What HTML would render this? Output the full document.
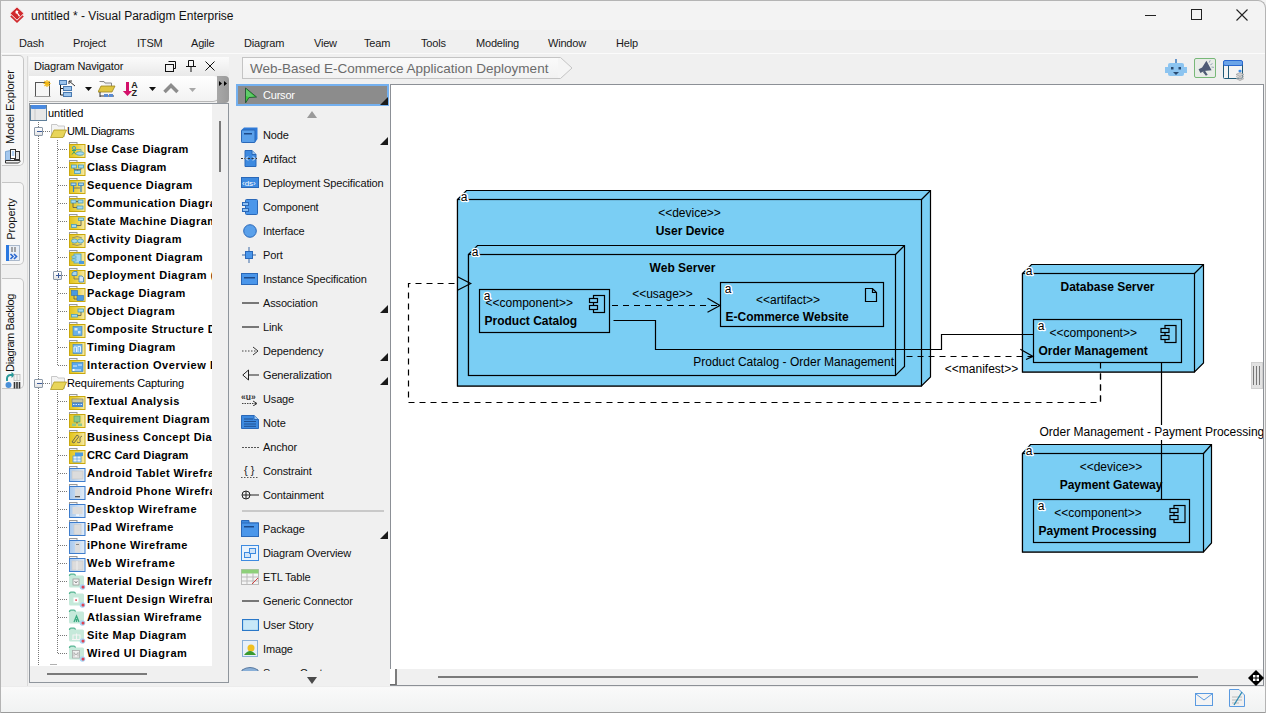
<!DOCTYPE html>
<html><head><meta charset="utf-8">
<style>
*{margin:0;padding:0;box-sizing:border-box}
html,body{width:1266px;height:713px;overflow:hidden;background:#f0f0f0;font-family:"Liberation Sans",sans-serif;color:#000}
.a{position:absolute;white-space:nowrap}
#win{position:absolute;left:0;top:0;width:1266px;height:713px;background:#f0f0f0;overflow:hidden}
#title{position:absolute;left:0;top:0;width:1266px;height:30px;background:#f3f3f3}
#menu{position:absolute;left:0;top:30px;width:1266px;height:23px;background:#f0f0f0}
.mi{position:absolute;top:37px;font-size:11px;letter-spacing:-0.2px;color:#1a1a1a}
.tree .r{position:absolute;font-size:11px;white-space:nowrap;height:18px;line-height:18px}
.tree .b{font-weight:bold;letter-spacing:0.33px}
.pal .t{position:absolute;left:263px;font-size:11px;color:#111;white-space:nowrap;line-height:14px}
.pal .tri{position:absolute;width:0;height:0;border-left:7px solid transparent;border-bottom:7px solid #222}
.dh{height:1px;background-image:linear-gradient(90deg,#777 50%,transparent 50%);background-size:2px 1px}
.dv{width:1px;background-image:linear-gradient(#777 50%,transparent 50%);background-size:1px 2px}
.exp{width:9px;height:9px;border:1px solid #8a98a8;background:linear-gradient(#fff,#e4e4e4);border-radius:1px}
.ic-y{width:17px;height:16px;background:#e3c93a;border:1px solid #b89e1a;border-top-width:2px;box-shadow:inset 0 0 0 2px #f2df6e}
.ic-w{width:16px;height:16px;background:#e6e6e6;border:1px solid #4a7ac0;border-left-width:2px}
.ic-g{width:17px;height:16px;background:#bfe3d4;border-top:2px solid #5ab496;border-radius:2px}
.pt{left:263px;font-size:11px;line-height:14px;color:#111;letter-spacing:-0.15px}
.pal-tri{width:0;height:0;border-left:8px solid transparent;border-bottom:8px solid #1a1a1a}
</style></head><body>
<div id="win">
<svg width="0" height="0" style="position:absolute"><defs><linearGradient id="yg" x1="0" x2="1"><stop offset="0" stop-color="#e2c41c"/><stop offset="0.55" stop-color="#ecd450"/><stop offset="1" stop-color="#f6ecb0"/></linearGradient><linearGradient id="bg" x1="0" x2="1"><stop offset="0" stop-color="#a8c8ec"/><stop offset="1" stop-color="#e4eef8"/></linearGradient></defs></svg>
<div id="title">
  <svg class="a" style="left:9px;top:6px" width="16" height="18" viewBox="0 0 16 18"><path d="M8 4 L14.8 10.5 L8 17 L1.2 10.5Z" fill="#d12a2e"/><path d="M8 0.8 L15 7.4 L8 14.2 L1 7.4Z" fill="#d12a2e" stroke="#f3f3f3" stroke-width="1"/><path d="M6.3 5.8 L7.6 4.2 L9.4 5.3 L8.8 6.8 L11 9.8 L10 10.8 L8.2 7.8 L6.8 7.6Z" fill="#fff"/></svg>
  <div class="a" style="left:31px;top:9px;font-size:12px;color:#111">untitled * - Visual Paradigm Enterprise</div>
  <div class="a" style="left:1145px;top:15px;width:11px;height:1px;background:#222"></div>
  <div class="a" style="left:1191px;top:9px;width:11px;height:11px;border:1px solid #222"></div>
  <svg class="a" style="left:1236px;top:9px" width="12" height="12"><path d="M0.5 0.5 L11.5 11.5 M11.5 0.5 L0.5 11.5" stroke="#222" stroke-width="1.1"/></svg>
</div>
<div id="menu"></div>
<div class="mi" style="left:19px">Dash</div>
<div class="mi" style="left:73px">Project</div>
<div class="mi" style="left:137px">ITSM</div>
<div class="mi" style="left:191px">Agile</div>
<div class="mi" style="left:244px">Diagram</div>
<div class="mi" style="left:314px">View</div>
<div class="mi" style="left:364px">Team</div>
<div class="mi" style="left:421px">Tools</div>
<div class="mi" style="left:476px">Modeling</div>
<div class="mi" style="left:548px">Window</div>
<div class="mi" style="left:616px">Help</div>
<div class="a" style="left:0;top:53px;width:1266px;height:1px;background:#fbfbfb"></div>

<!-- LEFT TABS -->
<div class="a" style="left:2px;top:55px;width:22px;height:111px;background:#f7f7f7;border:1px solid #c6c6c6;border-left:none;border-radius:0 5px 5px 0"></div>
<div class="a" style="left:-31px;top:100px;width:82px;text-align:center;transform:rotate(-90deg);font-size:11px;color:#111;line-height:14px">Model Explorer</div>
<svg class="a" style="left:4px;top:148px" width="18" height="16" viewBox="0 0 18 16"><path d="M1.5 3.5 L6.5 2.5 V12 L1.5 13Z" fill="#a4c8ee" stroke="#6a98c8" stroke-width="0.8"/><rect x="10.5" y="3.5" width="5" height="8" fill="#e4e4e4" stroke="#333" stroke-width="1"/><rect x="6.5" y="1.5" width="5" height="9" fill="#fff" stroke="#333" stroke-width="1"/><rect x="7.8" y="3" width="2.5" height="5" fill="#b0cff0"/><path d="M1.5 12.5 H16 V13.5 L14.5 15 H1.5Z" fill="#eee" stroke="#333" stroke-width="1"/></svg>
<div class="a" style="left:2px;top:182px;width:22px;height:83px;background:#f7f7f7;border:1px solid #c6c6c6;border-left:none;border-radius:0 5px 5px 0"></div>
<div class="a" style="left:-14px;top:212px;width:50px;text-align:center;transform:rotate(-90deg);font-size:11px;color:#111;line-height:14px">Property</div>
<svg class="a" style="left:6px;top:245px" width="14" height="16" viewBox="0 0 14 16"><rect x="0.5" y="0.5" width="13" height="15" fill="#e8eef6" stroke="#9aaac0" stroke-width="0.8"/><rect x="0" y="0" width="3" height="16" fill="#2a78e0"/><path d="M6 2 V7 M9 2 V7" stroke="#8a8a8a" stroke-width="1.5"/><path d="M4.5 9 L7 11.5 L4.5 14 M8 9 L10.5 11.5 L8 14" stroke="#2a68d0" stroke-width="1.6" fill="none"/></svg>
<div class="a" style="left:2px;top:278px;width:22px;height:111px;background:#f7f7f7;border:1px solid #c6c6c6;border-left:none;border-radius:0 5px 5px 0"></div>
<div class="a" style="left:-32px;top:326px;width:84px;text-align:center;transform:rotate(-90deg);font-size:11px;letter-spacing:-0.4px;color:#111;line-height:14px">Diagram Backlog</div>
<svg class="a" style="left:4px;top:372px" width="18" height="17" viewBox="0 0 18 17"><path d="M3 9 V6.5 A3.5 3.5 0 0 1 6.5 3 H8" stroke="#2a9a9a" stroke-width="2" fill="none"/><path d="M7.5 0 L11 3 L7.5 6Z" fill="#2a9a9a"/><circle cx="4.5" cy="13" r="3" fill="#4a90d8"/><path d="M10.5 10 V16.5 M13 10 V16.5 M15.5 10 V16.5" stroke="#333" stroke-width="1.6"/><rect x="10" y="2.5" width="6" height="6" fill="#f4f4f4" stroke="#bbb" stroke-width="0.8"/><path d="M13 2.5 V8.5" stroke="#bbb" stroke-width="0.8"/></svg>
<div class="a" style="left:27px;top:56px;width:1px;height:630px;background:#dadada"></div>

<!-- NAVIGATOR -->
<div class="a" style="left:29px;top:57px;width:200px;height:19px;background:linear-gradient(#fbfbfb,#e9e9e9)"></div>
<div class="a" style="left:34px;top:59px;font-size:11px;letter-spacing:-0.15px;line-height:14px;color:#111">Diagram Navigator</div>
<svg class="a" style="left:165px;top:61px" width="12" height="11"><path d="M3.5 0.5 H10.5 V7.5 H8.5" stroke="#111" fill="none"/><rect x="0.5" y="3.5" width="8" height="7" fill="none" stroke="#111"/></svg>
<svg class="a" style="left:186px;top:60px" width="10" height="12"><path d="M2.5 0.5 H7.5 V6.5 H2.5Z M0 6.5 H10 M5 7 V12" stroke="#111" fill="none"/></svg>
<svg class="a" style="left:205px;top:61px" width="10" height="10"><path d="M0.5 0.5 L9.5 9.5 M9.5 0.5 L0.5 9.5" stroke="#111" stroke-width="1"/></svg>
<div class="a" style="left:29px;top:76px;width:190px;height:26px;background:linear-gradient(#ffffff,#f2f2f2);border-radius:0 6px 6px 0;border-bottom:1px solid #b8b8b8"></div>
<div class="a" style="left:217px;top:76px;width:12px;height:27px;background:linear-gradient(90deg,#a8a8a8,#9a9a9a);border-radius:0 4px 4px 0"></div>
<svg class="a" style="left:219px;top:81px" width="9" height="5"><path d="M0 0 L3 2.5 L0 5Z M5 0 L8 2.5 L5 5Z" fill="#000"/></svg>
<svg class="a" style="left:34px;top:80px" width="18" height="18"><rect x="1.5" y="2.5" width="14" height="14" fill="#f6f6f6" stroke="#555"/><rect x="0.5" y="16" width="16" height="1" fill="#999"/><path d="M13 0 V7 M9.5 3.5 H16.5 M10.5 1 L15.5 6 M15.5 1 L10.5 6" stroke="#f2b712" stroke-width="1.2"/></svg>
<svg class="a" style="left:58px;top:80px" width="20" height="18"><rect x="1.5" y="0.5" width="7" height="4" fill="#9cc4ec" stroke="#4a7ab0"/><rect x="5.5" y="6.5" width="8" height="4" fill="#9cc4ec" stroke="#4a7ab0"/><rect x="5.5" y="12.5" width="8" height="4" fill="#9cc4ec" stroke="#4a7ab0"/><path d="M2.5 5 V15 H5 M2.5 8.5 H5" stroke="#222" fill="none"/><path d="M11 1 L17 6 M11 1 H14 M11 1 V4" stroke="#333" fill="none"/></svg>
<svg class="a" style="left:85px;top:87px" width="7" height="4"><path d="M0 0 H7 L3.5 4Z" fill="#111"/></svg>
<svg class="a" style="left:98px;top:80px" width="18" height="18"><path d="M1.5 1.5 H6 L7 3 H13.5 V8" stroke="#888" fill="#eee"/><path d="M3 6 H17 L14 12 H0Z" fill="#e0c640" stroke="#9a8420" stroke-width="0.8"/><path d="M2 12 V17 M2 16 H16" stroke="#333"/><rect x="6" y="14" width="4" height="3" fill="#5a8ad0"/><rect x="11" y="14" width="4" height="3" fill="#5a8ad0"/></svg>
<svg class="a" style="left:122px;top:79px" width="18" height="18"><rect x="4" y="3" width="3" height="10" fill="#d3106a"/><path d="M0.8 12 H10.2 L5.5 17Z" fill="#d3106a"/><text x="9.3" y="8.6" font-size="9" font-weight="bold" font-family="Liberation Sans" fill="#222">A</text><text x="9.5" y="17" font-size="9" font-weight="bold" font-family="Liberation Sans" fill="#222">Z</text></svg>
<svg class="a" style="left:149px;top:87px" width="7" height="4"><path d="M0 0 H7 L3.5 4Z" fill="#111"/></svg>
<svg class="a" style="left:163px;top:82px" width="16" height="12"><path d="M1.5 10 L8 3.5 L14.5 10" stroke="#8c8c8c" stroke-width="3.5" fill="none"/></svg>
<svg class="a" style="left:189px;top:88px" width="7" height="4"><path d="M0 0 H7 L3.5 4Z" fill="#a8a8a8"/></svg>
<div class="a" style="left:29px;top:103px;width:200px;height:580px;border:1px solid #8f959c;background:#f0f0f0"></div>
<div class="a" style="left:30px;top:104px;width:182px;height:562px;background:#fff"></div>
<div class="a" style="left:219px;top:121px;width:2px;height:51px;background:#7a7a7a"></div>
<div class="a" style="left:47px;top:673px;width:100px;height:2px;background:#7a7a7a"></div>
<svg class="a" style="left:30px;top:104px" width="18" height="18"><rect x="0.5" y="1.5" width="16" height="15" fill="#e8e8e8" stroke="#5f7f9a"/><rect x="1" y="1" width="15" height="4" fill="#4a8ae0" rx="1"/><path d="M5 5 V16" stroke="#c8c8c8"/></svg>
<div class="tree" style="position:absolute;left:0;top:0;width:212px;height:666px;overflow:hidden">
<div class="r" style="left:48px;top:104px">untitled</div>
<div class="r" style="left:67px;top:122px;letter-spacing:-0.5px">UML Diagrams</div>
<div class="r b" style="left:87px;top:140px;letter-spacing:0.31px">Use Case Diagram</div>
<svg class="a" style="left:69px;top:142px" width="17" height="16" viewBox="0 0 17 16"><rect x="0.5" y="0.5" width="7.5" height="2.5" fill="#f4f4f4" stroke="#9a9a9a" stroke-width="1"/><rect x="0.5" y="2.5" width="15.5" height="13" fill="url(#yg)" stroke="#c9a80c" stroke-width="1"/><circle cx="5" cy="6" r="1.6" fill="none" stroke="#4aa0b8"/><path d="M5 7.5 V10 L3 12.5 M5 10 L7 12.5 M3 8.5 H7" stroke="#3aa070" fill="none"/><ellipse cx="11" cy="11.5" rx="4" ry="1.8" fill="#a8d8f0" stroke="#4aa0b8" stroke-width="0.8"/><path d="M6 7.5 H12 V9" stroke="#4aa0b8" fill="none" stroke-width="0.8"/></svg>
<div class="a dh" style="left:58px;top:149px;width:10px"></div>
<div class="r b" style="left:87px;top:158px;letter-spacing:0.24px">Class Diagram</div>
<svg class="a" style="left:69px;top:160px" width="17" height="16" viewBox="0 0 17 16"><rect x="0.5" y="0.5" width="7.5" height="2.5" fill="#f4f4f4" stroke="#9a9a9a" stroke-width="1"/><rect x="0.5" y="2.5" width="15.5" height="13" fill="url(#yg)" stroke="#c9a80c" stroke-width="1"/><rect x="2.5" y="5" width="5" height="3" fill="#a8d8f0" stroke="#4aa0b8" stroke-width="0.8"/><rect x="9.5" y="5" width="5" height="3" fill="#a8d8f0" stroke="#4aa0b8" stroke-width="0.8"/><rect x="5.5" y="10.5" width="6" height="3" fill="#a8d8f0" stroke="#4aa0b8" stroke-width="0.8"/><path d="M5 8 V9.5 H12 V8 M8.5 9.5 V10.5" stroke="#666" stroke-width="0.8" fill="none"/></svg>
<div class="a dh" style="left:58px;top:167px;width:10px"></div>
<div class="r b" style="left:87px;top:176px;letter-spacing:0.42px">Sequence Diagram</div>
<svg class="a" style="left:69px;top:178px" width="17" height="16" viewBox="0 0 17 16"><rect x="0.5" y="0.5" width="7.5" height="2.5" fill="#f4f4f4" stroke="#9a9a9a" stroke-width="1"/><rect x="0.5" y="2.5" width="15.5" height="13" fill="url(#yg)" stroke="#c9a80c" stroke-width="1"/><rect x="2" y="5" width="5" height="2.5" fill="#a8d8f0" stroke="#3a80c0" stroke-width="0.8"/><rect x="9.5" y="5" width="5" height="2.5" fill="#a8d8f0" stroke="#3a80c0" stroke-width="0.8"/><path d="M4.5 7.5 V14 M12 7.5 V14" stroke="#3a80c0" stroke-width="1.2"/><path d="M5 10 H11" stroke="#666" stroke-width="0.8"/></svg>
<div class="a dh" style="left:58px;top:185px;width:10px"></div>
<div class="r b" style="left:87px;top:194px;letter-spacing:0.45px">Communication Diagram</div>
<svg class="a" style="left:69px;top:196px" width="17" height="16" viewBox="0 0 17 16"><rect x="0.5" y="0.5" width="7.5" height="2.5" fill="#f4f4f4" stroke="#9a9a9a" stroke-width="1"/><rect x="0.5" y="2.5" width="15.5" height="13" fill="url(#yg)" stroke="#c9a80c" stroke-width="1"/><rect x="2" y="4" width="5" height="3" fill="#a8d8f0" stroke="#4aa0b8" stroke-width="0.8"/><rect x="9" y="4" width="5" height="3" fill="#a8d8f0" stroke="#4aa0b8" stroke-width="0.8"/><rect x="8" y="10" width="6" height="3" fill="#a8d8f0" stroke="#4aa0b8" stroke-width="0.8"/><path d="M4 7 V11.5 H8 M7 5.5 H9" stroke="#555" stroke-width="0.8" fill="none"/></svg>
<div class="a dh" style="left:58px;top:203px;width:10px"></div>
<div class="r b" style="left:87px;top:212px;letter-spacing:0.45px">State Machine Diagram</div>
<svg class="a" style="left:69px;top:214px" width="17" height="16" viewBox="0 0 17 16"><rect x="0.5" y="0.5" width="7.5" height="2.5" fill="#f4f4f4" stroke="#9a9a9a" stroke-width="1"/><rect x="0.5" y="2.5" width="15.5" height="13" fill="url(#yg)" stroke="#c9a80c" stroke-width="1"/><rect x="9.5" y="4" width="5" height="2.5" fill="#a8d8f0" stroke="#4aa0b8" stroke-width="0.8"/><rect x="2.5" y="10.5" width="5" height="3" fill="#a8d8f0" stroke="#4aa0b8" stroke-width="0.8"/><path d="M12 6.5 V11.5 H7.5" stroke="#555" stroke-width="0.8" fill="none"/></svg>
<div class="a dh" style="left:58px;top:221px;width:10px"></div>
<div class="r b" style="left:87px;top:230px;letter-spacing:0.51px">Activity Diagram</div>
<svg class="a" style="left:69px;top:232px" width="17" height="16" viewBox="0 0 17 16"><rect x="0.5" y="0.5" width="7.5" height="2.5" fill="#f4f4f4" stroke="#9a9a9a" stroke-width="1"/><rect x="0.5" y="2.5" width="15.5" height="13" fill="url(#yg)" stroke="#c9a80c" stroke-width="1"/><ellipse cx="5.5" cy="9" rx="3" ry="2" fill="#a8d8f0" stroke="#4aa0b8" stroke-width="0.8"/><ellipse cx="11.5" cy="9" rx="3" ry="2" fill="#a8d8f0" stroke="#4aa0b8" stroke-width="0.8"/><path d="M3 6 Q8 3 13 6 M3 12 Q8 15 13 12" stroke="#777" stroke-width="0.7" fill="none"/></svg>
<div class="a dh" style="left:58px;top:239px;width:10px"></div>
<div class="r b" style="left:87px;top:248px;letter-spacing:0.46px">Component Diagram</div>
<svg class="a" style="left:69px;top:250px" width="17" height="16" viewBox="0 0 17 16"><rect x="0.5" y="0.5" width="7.5" height="2.5" fill="#f4f4f4" stroke="#9a9a9a" stroke-width="1"/><rect x="0.5" y="2.5" width="15.5" height="13" fill="url(#yg)" stroke="#c9a80c" stroke-width="1"/><rect x="5" y="4" width="7" height="9" fill="#a8d8f0" stroke="#4aa0b8" stroke-width="0.8"/><rect x="3" y="6" width="4" height="2" fill="#a8d8f0" stroke="#4aa0b8" stroke-width="0.6"/><rect x="3" y="9" width="4" height="2" fill="#a8d8f0" stroke="#4aa0b8" stroke-width="0.6"/><rect x="10" y="11" width="5" height="3" fill="#4a9ae0"/></svg>
<div class="a dh" style="left:58px;top:257px;width:10px"></div>
<div class="r b" style="left:87px;top:266px;letter-spacing:0.56px">Deployment Diagram (</div>
<svg class="a" style="left:69px;top:268px" width="17" height="16" viewBox="0 0 17 16"><rect x="0.5" y="0.5" width="7.5" height="2.5" fill="#f4f4f4" stroke="#9a9a9a" stroke-width="1"/><rect x="0.5" y="2.5" width="15.5" height="13" fill="url(#yg)" stroke="#c9a80c" stroke-width="1"/><path d="M3 5 L5 3.5 L8 3.5 L8 7.5 L3 7.5Z" fill="#a8d8f0" stroke="#3a80c0" stroke-width="0.8"/><path d="M10 8 H13 L14.5 9.5 V14 H10Z" fill="#d8e8f8" stroke="#3a80c0" stroke-width="0.8"/><path d="M5 8 V11 H10" stroke="#666" stroke-width="0.7" fill="none"/></svg>
<div class="a dh" style="left:58px;top:275px;width:10px"></div>
<div class="r b" style="left:87px;top:284px;letter-spacing:0.47px">Package Diagram</div>
<svg class="a" style="left:69px;top:286px" width="17" height="16" viewBox="0 0 17 16"><rect x="0.5" y="0.5" width="7.5" height="2.5" fill="#f4f4f4" stroke="#9a9a9a" stroke-width="1"/><rect x="0.5" y="2.5" width="15.5" height="13" fill="url(#yg)" stroke="#c9a80c" stroke-width="1"/><rect x="2.5" y="4.5" width="6" height="5" fill="#4a9ae0" stroke="#2a70c0" stroke-width="0.6"/><rect x="8" y="9.5" width="6.5" height="5" fill="#4a9ae0" stroke="#2a70c0" stroke-width="0.6"/><path d="M5 9.5 V13 H8" stroke="#555" stroke-width="0.8" fill="none"/></svg>
<div class="a dh" style="left:58px;top:293px;width:10px"></div>
<div class="r b" style="left:87px;top:302px;letter-spacing:0.49px">Object Diagram</div>
<svg class="a" style="left:69px;top:304px" width="17" height="16" viewBox="0 0 17 16"><rect x="0.5" y="0.5" width="7.5" height="2.5" fill="#f4f4f4" stroke="#9a9a9a" stroke-width="1"/><rect x="0.5" y="2.5" width="15.5" height="13" fill="url(#yg)" stroke="#c9a80c" stroke-width="1"/><rect x="9" y="5" width="5.5" height="3" fill="#a8d8f0" stroke="#4aa0b8" stroke-width="0.8"/><rect x="2.5" y="10.5" width="6" height="2.5" fill="#a8d8f0" stroke="#4aa0b8" stroke-width="0.8"/><path d="M12 8 V11.5 H8.5" stroke="#555" stroke-width="0.8" fill="none"/></svg>
<div class="a dh" style="left:58px;top:311px;width:10px"></div>
<div class="r b" style="left:87px;top:320px;letter-spacing:0.45px">Composite Structure Diagram</div>
<svg class="a" style="left:69px;top:322px" width="17" height="16" viewBox="0 0 17 16"><rect x="0.5" y="0.5" width="7.5" height="2.5" fill="#f4f4f4" stroke="#9a9a9a" stroke-width="1"/><rect x="0.5" y="2.5" width="15.5" height="13" fill="url(#yg)" stroke="#c9a80c" stroke-width="1"/><rect x="4" y="4.5" width="9" height="9" fill="#6ab0e8" stroke="#3a80c0" stroke-width="0.6"/><rect x="5.5" y="6" width="3" height="2.5" fill="#d0e8f8"/><rect x="9" y="9" width="2.5" height="2.5" fill="#d0e8f8"/></svg>
<div class="a dh" style="left:58px;top:329px;width:10px"></div>
<div class="r b" style="left:87px;top:338px;letter-spacing:0.41px">Timing Diagram</div>
<svg class="a" style="left:69px;top:340px" width="17" height="16" viewBox="0 0 17 16"><rect x="0.5" y="0.5" width="7.5" height="2.5" fill="#f4f4f4" stroke="#9a9a9a" stroke-width="1"/><rect x="0.5" y="2.5" width="15.5" height="13" fill="url(#yg)" stroke="#c9a80c" stroke-width="1"/><rect x="4" y="4.5" width="9" height="9" fill="#7ab8ec" stroke="#3a80c0" stroke-width="0.6"/><path d="M5 12 V7 H7.5 V12 M9 12 V6.5 H11.5 V12" stroke="#e0f0ff" fill="none"/></svg>
<div class="a dh" style="left:58px;top:347px;width:10px"></div>
<div class="r b" style="left:87px;top:356px;letter-spacing:0.56px">Interaction Overview Diagram</div>
<svg class="a" style="left:69px;top:358px" width="17" height="16" viewBox="0 0 17 16"><rect x="0.5" y="0.5" width="7.5" height="2.5" fill="#f4f4f4" stroke="#9a9a9a" stroke-width="1"/><rect x="0.5" y="2.5" width="15.5" height="13" fill="url(#yg)" stroke="#c9a80c" stroke-width="1"/><rect x="3" y="4.5" width="11" height="9" fill="#5aa8ec" stroke="#3a80c0" stroke-width="0.6"/><path d="M4 8 H8 M9 7 H13 M5 12 H12" stroke="#e0f0ff"/><rect x="3.5" y="11" width="2" height="2" fill="#fff"/></svg>
<div class="a dh" style="left:58px;top:365px;width:10px"></div>
<div class="r" style="left:67px;top:374px;letter-spacing:-0.1px">Requirements Capturing</div>
<div class="r b" style="left:87px;top:392px;letter-spacing:0.45px">Textual Analysis</div>
<svg class="a" style="left:69px;top:394px" width="17" height="16" viewBox="0 0 17 16"><rect x="0.5" y="0.5" width="7.5" height="2.5" fill="#f4f4f4" stroke="#9a9a9a" stroke-width="1"/><rect x="0.5" y="2.5" width="15.5" height="13" fill="url(#yg)" stroke="#c9a80c" stroke-width="1"/><rect x="3" y="5" width="11" height="3.5" fill="#c8c8a0" stroke="#777" stroke-width="0.6"/><rect x="3" y="8.5" width="11" height="4.5" fill="#4a8ad0"/><path d="M4 10.5 H13" stroke="#d0e8ff" stroke-dasharray="1.5,1"/></svg>
<div class="a dh" style="left:58px;top:401px;width:10px"></div>
<div class="r b" style="left:87px;top:410px;letter-spacing:0.45px">Requirement Diagram</div>
<svg class="a" style="left:69px;top:412px" width="17" height="16" viewBox="0 0 17 16"><rect x="0.5" y="0.5" width="7.5" height="2.5" fill="#f4f4f4" stroke="#9a9a9a" stroke-width="1"/><rect x="0.5" y="2.5" width="15.5" height="13" fill="url(#yg)" stroke="#c9a80c" stroke-width="1"/><rect x="5" y="4" width="6" height="6" fill="#8cc890" stroke="#4a9a60" stroke-width="0.6"/><rect x="3" y="11.5" width="4" height="2.5" fill="#8cc890"/><rect x="9" y="11.5" width="4" height="2.5" fill="#8cc890"/><path d="M8 10 V11.5" stroke="#555"/></svg>
<div class="a dh" style="left:58px;top:419px;width:10px"></div>
<div class="r b" style="left:87px;top:428px;letter-spacing:0.45px">Business Concept Diagram</div>
<svg class="a" style="left:69px;top:430px" width="17" height="16" viewBox="0 0 17 16"><rect x="0.5" y="0.5" width="7.5" height="2.5" fill="#f4f4f4" stroke="#9a9a9a" stroke-width="1"/><rect x="0.5" y="2.5" width="15.5" height="13" fill="url(#yg)" stroke="#c9a80c" stroke-width="1"/><path d="M3 12 L8 5 L10 6.5 L5 13Z" fill="none" stroke="#555" stroke-width="0.8"/><path d="M8 12 Q12 14 11 10 Q10 7 13 6" stroke="#555" stroke-width="0.8" fill="none"/></svg>
<div class="a dh" style="left:58px;top:437px;width:10px"></div>
<div class="r b" style="left:87px;top:446px;letter-spacing:0.15px">CRC Card Diagram</div>
<svg class="a" style="left:69px;top:448px" width="17" height="16" viewBox="0 0 17 16"><rect x="0.5" y="0.5" width="7.5" height="2.5" fill="#f4f4f4" stroke="#9a9a9a" stroke-width="1"/><rect x="0.5" y="2.5" width="15.5" height="13" fill="url(#yg)" stroke="#c9a80c" stroke-width="1"/><rect x="6" y="4.5" width="8" height="3.5" fill="#4a9ae0"/><rect x="4" y="8" width="8" height="6" fill="#e8f0f8" stroke="#4a9ae0" stroke-width="0.8"/><path d="M8 8 V14 M4 11 H12" stroke="#4a9ae0" stroke-width="0.6"/></svg>
<div class="a dh" style="left:58px;top:455px;width:10px"></div>
<div class="r b" style="left:87px;top:464px;letter-spacing:0.45px">Android Tablet Wireframe</div>
<svg class="a" style="left:69px;top:466px" width="17" height="16" viewBox="0 0 17 16"><rect x="0.5" y="0.5" width="7.5" height="2.5" fill="#f4f4f4" stroke="#9a9a9a" stroke-width="1"/><rect x="0.5" y="2.5" width="15.5" height="13" fill="url(#bg)" stroke="#3d7ccc" stroke-width="1"/><rect x="3" y="5" width="11" height="8" fill="#dcdcdc" stroke="#c4c4c4" stroke-width="0.6"/></svg>
<div class="a dh" style="left:58px;top:473px;width:10px"></div>
<div class="r b" style="left:87px;top:482px;letter-spacing:0.45px">Android Phone Wireframe</div>
<svg class="a" style="left:69px;top:484px" width="17" height="16" viewBox="0 0 17 16"><rect x="0.5" y="0.5" width="7.5" height="2.5" fill="#f4f4f4" stroke="#9a9a9a" stroke-width="1"/><rect x="0.5" y="2.5" width="15.5" height="13" fill="url(#bg)" stroke="#3d7ccc" stroke-width="1"/><rect x="6" y="4.5" width="5" height="9.5" fill="#dcdcdc"/><rect x="6" y="12" width="5" height="1.3" fill="#555"/></svg>
<div class="a dh" style="left:58px;top:491px;width:10px"></div>
<div class="r b" style="left:87px;top:500px;letter-spacing:0.59px">Desktop Wireframe</div>
<svg class="a" style="left:69px;top:502px" width="17" height="16" viewBox="0 0 17 16"><rect x="0.5" y="0.5" width="7.5" height="2.5" fill="#f4f4f4" stroke="#9a9a9a" stroke-width="1"/><rect x="0.5" y="2.5" width="15.5" height="13" fill="url(#bg)" stroke="#3d7ccc" stroke-width="1"/><rect x="3.5" y="5" width="10" height="7" fill="#dcdcdc"/><rect x="7" y="12.5" width="3" height="1.2" fill="#fff"/></svg>
<div class="a dh" style="left:58px;top:509px;width:10px"></div>
<div class="r b" style="left:87px;top:518px;letter-spacing:0.5px">iPad Wireframe</div>
<svg class="a" style="left:69px;top:520px" width="17" height="16" viewBox="0 0 17 16"><rect x="0.5" y="0.5" width="7.5" height="2.5" fill="#f4f4f4" stroke="#9a9a9a" stroke-width="1"/><rect x="0.5" y="2.5" width="15.5" height="13" fill="url(#bg)" stroke="#3d7ccc" stroke-width="1"/><rect x="5" y="4.5" width="7" height="10" fill="#dcdcdc" stroke="#c8c8c8" stroke-width="0.6"/></svg>
<div class="a dh" style="left:58px;top:527px;width:10px"></div>
<div class="r b" style="left:87px;top:536px;letter-spacing:0.47px">iPhone Wireframe</div>
<svg class="a" style="left:69px;top:538px" width="17" height="16" viewBox="0 0 17 16"><rect x="0.5" y="0.5" width="7.5" height="2.5" fill="#f4f4f4" stroke="#9a9a9a" stroke-width="1"/><rect x="0.5" y="2.5" width="15.5" height="13" fill="url(#bg)" stroke="#3d7ccc" stroke-width="1"/><rect x="6" y="4.5" width="5" height="10" fill="#dcdcdc"/><rect x="7" y="6" width="3" height="1" fill="#888"/></svg>
<div class="a dh" style="left:58px;top:545px;width:10px"></div>
<div class="r b" style="left:87px;top:554px;letter-spacing:0.67px">Web Wireframe</div>
<svg class="a" style="left:69px;top:556px" width="17" height="16" viewBox="0 0 17 16"><rect x="0.5" y="0.5" width="7.5" height="2.5" fill="#f4f4f4" stroke="#9a9a9a" stroke-width="1"/><rect x="0.5" y="2.5" width="15.5" height="13" fill="url(#bg)" stroke="#3d7ccc" stroke-width="1"/><rect x="3" y="5" width="11" height="9" fill="#dcdcdc" stroke="#c8c8c8" stroke-width="0.6"/><path d="M8 5 V14" stroke="#f0f0f0"/></svg>
<div class="a dh" style="left:58px;top:563px;width:10px"></div>
<div class="r b" style="left:87px;top:572px;letter-spacing:0.45px">Material Design Wireframe</div>
<svg class="a" style="left:68px;top:573px" width="18" height="17" viewBox="0 0 18 17"><path d="M1 2.5 Q1 1 2.5 1 H6 Q7 1 7.5 2.5 H14.5 Q16 2.5 16 4 V13 Q16 14.5 14.5 14.5 H2.5 Q1 14.5 1 13Z" fill="#c6e9da"/><path d="M1.5 3 Q1.5 1.2 3 1.2 H6 Q7 1.2 7.5 2.6" stroke="#57b593" stroke-width="1.3" fill="none"/><rect x="5" y="6" width="6" height="6" fill="#f4f4f4" stroke="#999" stroke-width="0.8"/><path d="M6.5 8 L8 10 L9.5 8" stroke="#777" fill="none" stroke-width="0.8"/><circle cx="14.5" cy="14" r="2.8" fill="#a8d4f4"/><path d="M15 12.3 L16.8 14.1 L15 15.9 L13.2 14.1Z" fill="#e04050"/></svg>
<div class="a dh" style="left:58px;top:581px;width:10px"></div>
<div class="r b" style="left:87px;top:590px;letter-spacing:0.45px">Fluent Design Wireframe</div>
<svg class="a" style="left:68px;top:591px" width="18" height="17" viewBox="0 0 18 17"><path d="M1 2.5 Q1 1 2.5 1 H6 Q7 1 7.5 2.5 H14.5 Q16 2.5 16 4 V13 Q16 14.5 14.5 14.5 H2.5 Q1 14.5 1 13Z" fill="#c6e9da"/><path d="M1.5 3 Q1.5 1.2 3 1.2 H6 Q7 1.2 7.5 2.6" stroke="#57b593" stroke-width="1.3" fill="none"/><rect x="5.5" y="6.5" width="5" height="5" fill="#fff"/><rect x="7.3" y="8.3" width="1.6" height="1.6" fill="#e04050"/><circle cx="14.5" cy="14" r="2.8" fill="#a8d4f4"/><path d="M15 12.3 L16.8 14.1 L15 15.9 L13.2 14.1Z" fill="#e04050"/></svg>
<div class="a dh" style="left:58px;top:599px;width:10px"></div>
<div class="r b" style="left:87px;top:608px;letter-spacing:0.5px">Atlassian Wireframe</div>
<svg class="a" style="left:68px;top:609px" width="18" height="17" viewBox="0 0 18 17"><path d="M1 2.5 Q1 1 2.5 1 H6 Q7 1 7.5 2.5 H14.5 Q16 2.5 16 4 V13 Q16 14.5 14.5 14.5 H2.5 Q1 14.5 1 13Z" fill="#c6e9da"/><path d="M1.5 3 Q1.5 1.2 3 1.2 H6 Q7 1.2 7.5 2.6" stroke="#57b593" stroke-width="1.3" fill="none"/><path d="M6 13 L8.5 7 L11 13 M8.5 10 V13" stroke="#3aaa80" stroke-width="1.3" fill="none"/><circle cx="14.5" cy="14" r="2.8" fill="#a8d4f4"/><path d="M15 12.3 L16.8 14.1 L15 15.9 L13.2 14.1Z" fill="#e04050"/></svg>
<div class="a dh" style="left:58px;top:617px;width:10px"></div>
<div class="r b" style="left:87px;top:626px;letter-spacing:0.47px">Site Map Diagram</div>
<svg class="a" style="left:68px;top:627px" width="18" height="17" viewBox="0 0 18 17"><path d="M1 2.5 Q1 1 2.5 1 H6 Q7 1 7.5 2.5 H14.5 Q16 2.5 16 4 V13 Q16 14.5 14.5 14.5 H2.5 Q1 14.5 1 13Z" fill="#c6e9da"/><path d="M1.5 3 Q1.5 1.2 3 1.2 H6 Q7 1.2 7.5 2.6" stroke="#57b593" stroke-width="1.3" fill="none"/><path d="M4 12.5 H13 M5 8 V12 M8.5 6.5 V12 M12 8 V12 M4.5 8 H12.5" stroke="#f4f4f4" stroke-width="1.1" fill="none"/><circle cx="14.5" cy="14" r="2.8" fill="#a8d4f4"/><path d="M15 12.3 L16.8 14.1 L15 15.9 L13.2 14.1Z" fill="#e04050"/></svg>
<div class="a dh" style="left:58px;top:635px;width:10px"></div>
<div class="r b" style="left:87px;top:644px;letter-spacing:0.55px">Wired UI Diagram</div>
<svg class="a" style="left:68px;top:645px" width="18" height="17" viewBox="0 0 18 17"><path d="M1 2.5 Q1 1 2.5 1 H6 Q7 1 7.5 2.5 H14.5 Q16 2.5 16 4 V13 Q16 14.5 14.5 14.5 H2.5 Q1 14.5 1 13Z" fill="#c6e9da"/><path d="M1.5 3 Q1.5 1.2 3 1.2 H6 Q7 1.2 7.5 2.6" stroke="#57b593" stroke-width="1.3" fill="none"/><rect x="4.5" y="5.5" width="7" height="7.5" fill="#f0f0f0" stroke="#aaa" stroke-width="0.8"/><path d="M6 11.5 V7.5 L8 10 L10 7.5 V11.5" stroke="#999" stroke-width="0.7" fill="none"/><circle cx="14.5" cy="14" r="2.8" fill="#a8d4f4"/><path d="M15 12.3 L16.8 14.1 L15 15.9 L13.2 14.1Z" fill="#e04050"/></svg>
<div class="a dh" style="left:58px;top:653px;width:10px"></div>
<div class="a dv" style="left:38px;top:122px;height:544px"></div>
<div class="a" style="left:50px;top:664px;width:7px;height:1px;background:#b0b0b0"></div>
<div class="a dv" style="left:57px;top:140px;height:225px"></div>
<div class="a dv" style="left:57px;top:392px;height:261px"></div>
<div class="a dh" style="left:43px;top:131px;width:7px"></div>
<div class="a dh" style="left:43px;top:383px;width:7px"></div>
<div class="a exp" style="left:34px;top:127px"><div style="position:absolute;left:2px;top:3px;width:5px;height:1px;background:#3a5a9a"></div></div>
<div class="a exp" style="left:34px;top:379px"><div style="position:absolute;left:2px;top:3px;width:5px;height:1px;background:#3a5a9a"></div></div>
<div class="a exp" style="left:53px;top:271px"><div style="position:absolute;left:2px;top:3px;width:5px;height:1px;background:#3a5a9a"></div><div style="position:absolute;left:4px;top:1px;width:1px;height:5px;background:#3a5a9a"></div></div>
<svg class="a" style="left:50px;top:123px" width="17" height="16" viewBox="0 0 17 16"><path d="M1.5 1.5 H7 L8 3 H14.5 V13.5 H1.5Z" fill="#f4f4f4" stroke="#c8c8c8"/><path d="M4 7 H16.5 L13 14.5 H0.5Z" fill="#e8d55a" stroke="#b09a20" stroke-width="0.8"/></svg>
<svg class="a" style="left:50px;top:375px" width="17" height="16" viewBox="0 0 17 16"><path d="M1.5 1.5 H7 L8 3 H14.5 V13.5 H1.5Z" fill="#f4f4f4" stroke="#c8c8c8"/><path d="M4 7 H16.5 L13 14.5 H0.5Z" fill="#e8d55a" stroke="#b09a20" stroke-width="0.8"/></svg>
</div>

<!-- PALETTE -->
<div class="a" style="left:236px;top:84px;width:153px;height:22px;border:2px solid #74b0ef;background:#8c8c8c"></div>
<svg class="a" style="left:244px;top:87px" width="14" height="17"><path d="M1.5 1 L12.5 10 L5 10.5 L1.5 16Z" fill="#3ccc3c" stroke="#2a5a3a" stroke-width="1"/><path d="M2 2 L10 9.5 L4.5 10 L2 9Z" fill="#7ac88a" opacity="0.6"/></svg>
<div class="a" style="left:263px;top:88px;font-size:11px;line-height:14px;color:#fff;letter-spacing:-0.2px">Cursor</div>
<div class="a pal-tri" style="left:380px;top:97px"></div>
<svg class="a" style="left:307px;top:110px" width="10" height="8"><path d="M0 8 L5 1 L10 8Z" fill="#9a9a9a"/></svg>
<svg class="a" style="left:241px;top:127px" width="17" height="16"><path d="M3 0.5 H16.5 V12 L14 15.5 H0.5 V3Z" fill="#2f7ad8"/><rect x="0.5" y="3" width="13.5" height="12.5" fill="#5aa0ea" stroke="#2a68b8" rx="1"/><rect x="3" y="6" width="8" height="1.5" fill="#1c4a8a"/></svg>
<div class="a pt" style="top:128px">Node</div>
<svg class="a" style="left:241px;top:150px" width="17" height="17"><path d="M4 0.5 H11 L15 4.5 V16.5 H4Z" fill="#3d8ae0" stroke="#2a68b8"/><path d="M11 0.5 V4.5 H15" fill="#9cc8f2" stroke="#2a68b8"/><path d="M0 8.5 H17" stroke="#333" stroke-dasharray="2,1.5"/><path d="M7 6.5 L5 8.5 L7 10.5 M12 6.5 L14 8.5 L12 10.5" stroke="#fff" fill="none"/></svg>
<div class="a pt" style="top:152px">Artifact</div>
<svg class="a" style="left:241px;top:177px" width="18" height="11"><rect x="0.5" y="0.5" width="17" height="10" fill="#3d8ae0" stroke="#2a68b8"/><text x="1" y="8.5" font-size="8" font-family="Liberation Sans" fill="#fff">‹ds›</text></svg>
<div class="a pt" style="top:176px">Deployment Specification</div>
<svg class="a" style="left:242px;top:199px" width="16" height="16"><rect x="3.5" y="0.5" width="12" height="15" fill="#4a96ea" stroke="#2a68b8" rx="1"/><rect x="0.5" y="3.5" width="6" height="3" fill="#8cc0f4" stroke="#2a68b8"/><rect x="0.5" y="9.5" width="6" height="3" fill="#8cc0f4" stroke="#2a68b8"/></svg>
<div class="a pt" style="top:200px">Component</div>
<svg class="a" style="left:243px;top:224px" width="14" height="14"><circle cx="7" cy="7" r="6.3" fill="#5aa0ea" stroke="#2a68b8"/></svg>
<div class="a pt" style="top:224px">Interface</div>
<svg class="a" style="left:242px;top:247px" width="14" height="16"><path d="M7 0 V16 M0 8 H14" stroke="#3a6aa8"/><rect x="3.5" y="4.5" width="7" height="7" fill="#4a96ea" stroke="#2a68b8"/></svg>
<div class="a pt" style="top:248px">Port</div>
<svg class="a" style="left:241px;top:273px" width="17" height="12"><rect x="0.5" y="0.5" width="16" height="11" fill="#4a96ea" stroke="#2a68b8"/><rect x="3" y="4" width="11" height="1.5" fill="#1c4a8a"/></svg>
<div class="a pt" style="top:272px">Instance Specification</div>
<div class="a" style="left:242px;top:302px;width:17px;height:2px;background:#777"></div>
<div class="a pt" style="top:296px">Association</div>
<div class="a" style="left:242px;top:326px;width:17px;height:2px;background:#777"></div>
<div class="a pt" style="top:320px">Link</div>
<svg class="a" style="left:242px;top:346px" width="17" height="10"><path d="M0 5 H15" stroke="#444" stroke-dasharray="1.5,1.5"/><path d="M11 1 L16 5 L11 9" stroke="#333" fill="none"/></svg>
<div class="a pt" style="top:344px">Dependency</div>
<svg class="a" style="left:242px;top:369px" width="17" height="12"><path d="M6.5 1 L0.8 6 L6.5 11Z M6.5 6 H17" stroke="#222" fill="none"/></svg>
<div class="a pt" style="top:368px">Generalization</div>
<svg class="a" style="left:241px;top:393px" width="18" height="13"><text x="0" y="7" font-size="8.5" font-weight="bold" font-family="Liberation Sans" fill="#333">«u»</text><path d="M1 10.5 H15" stroke="#444" stroke-dasharray="1.5,1"/><path d="M12 8 L16 10.5 L12 13" stroke="#333" fill="none"/></svg>
<div class="a pt" style="top:392px">Usage</div>
<svg class="a" style="left:241px;top:415px" width="18" height="14"><path d="M0.5 0.5 H13 L17.5 4.5 V13.5 H0.5Z" fill="#3d8ae0" stroke="#2a68b8"/><path d="M13 0.5 V4.5 H17.5" fill="#9cc8f2" stroke="#2a68b8"/><path d="M3 4 H12 M3 6.5 H15 M3 9 H15 M3 11.3 H15" stroke="#1c4a8a" stroke-width="0.9"/></svg>
<div class="a pt" style="top:416px">Note</div>
<div class="a" style="left:242px;top:447px;width:17px;height:1px;background-image:linear-gradient(90deg,#555 66%,transparent 66%);background-size:3px 1px"></div>
<div class="a pt" style="top:440px">Anchor</div>
<svg class="a" style="left:241px;top:463px" width="18" height="16"><text x="3" y="11" font-size="11" font-family="Liberation Sans" fill="#222">{ }</text><path d="M0 14.5 H18" stroke="#555" stroke-dasharray="1.5,1.5"/></svg>
<div class="a pt" style="top:464px">Constraint</div>
<svg class="a" style="left:241px;top:490px" width="18" height="10"><circle cx="5" cy="5" r="4" fill="none" stroke="#222"/><path d="M1 5 H18 M5 1 V9" stroke="#222"/></svg>
<div class="a pt" style="top:488px">Containment</div>
<svg class="a" style="left:241px;top:520px" width="18" height="17"><path d="M0.5 0.5 H8 V3 H17.5 V16.5 H0.5Z" fill="#3d8ae0" stroke="#2a68b8"/><rect x="0.5" y="3" width="17" height="13.5" fill="#4a96ea" stroke="#2a68b8"/><rect x="3" y="6" width="10" height="1.5" fill="#1c4a8a"/></svg>
<div class="a pt" style="top:522px">Package</div>
<svg class="a" style="left:241px;top:545px" width="18" height="16"><rect x="0.5" y="0.5" width="17" height="15" fill="#e8f2fc" stroke="#3d8ae0"/><rect x="3.5" y="7.5" width="6" height="5" fill="#cfe3f8" stroke="#3d8ae0"/><rect x="8.5" y="3.5" width="6" height="5" fill="#cfe3f8" stroke="#3d8ae0"/></svg>
<div class="a pt" style="top:546px">Diagram Overview</div>
<svg class="a" style="left:241px;top:569px" width="18" height="16"><rect x="0.5" y="0.5" width="17" height="15" fill="#f4f4f4" stroke="#bbb"/><rect x="0.5" y="0.5" width="17" height="4" fill="#8ed07a"/><path d="M0 8 H18 M0 12 H18 M6 4 V16 M12 4 V16" stroke="#bbb"/><path d="M11 15 L17 9" stroke="#d04040"/></svg>
<div class="a pt" style="top:570px">ETL Table</div>
<div class="a" style="left:242px;top:600px;width:17px;height:2px;background:#777"></div>
<div class="a pt" style="top:594px">Generic Connector</div>
<svg class="a" style="left:242px;top:619px" width="17" height="12"><rect x="0.5" y="0.5" width="16" height="11" fill="#c8e8f8" stroke="#2a78c8" stroke-width="1.2"/></svg>
<div class="a pt" style="top:618px">User Story</div>
<svg class="a" style="left:242px;top:640px" width="16" height="17"><rect x="0.5" y="0.5" width="15" height="16" fill="#e8f0f8" stroke="#8ab0d8"/><circle cx="9" cy="8" r="3.5" fill="#f0c020"/><path d="M2 15 Q8 7 14 15Z" fill="#3a9a30"/></svg>
<div class="a pt" style="top:642px">Image</div>
<svg class="a" style="left:241px;top:666px" width="18" height="8"><path d="M1 8 V4 Q9 -1 17 4 V8" fill="#8ab0d8" stroke="#5a7aa0"/></svg>
<div class="a pt" style="top:666px">Screen Capture</div>
<div class="a pal-tri" style="left:380px;top:137px"></div>
<div class="a pal-tri" style="left:380px;top:305px"></div>
<div class="a pal-tri" style="left:380px;top:353px"></div>
<div class="a pal-tri" style="left:380px;top:377px"></div>
<div class="a pal-tri" style="left:380px;top:531px"></div>
<div class="a" style="left:242px;top:510px;width:142px;height:2px;background:#c9c9c9"></div>
<div class="a" style="left:236px;top:671px;width:154px;height:16px;background:#f0f0f0"></div>
<svg class="a" style="left:307px;top:677px" width="10" height="8"><path d="M0 0 L5 7 L10 0Z" fill="#4a4a4a"/></svg>
<!-- CANVAS -->
<div class="a" style="left:390px;top:84px;width:874px;height:602px;border:1px solid #8c9096;border-right:1px solid #8c9096;background:#f0f0f0"></div>
<div class="a" style="left:391px;top:85px;width:872px;height:584px;background:#fff"></div>
<svg class="a" style="left:0;top:0" width="1266" height="713" viewBox="0 0 1266 713">
<defs><style>.t{font-family:"Liberation Sans",sans-serif;font-size:12px;fill:#000}.b{font-weight:bold}.mk{font-family:"Liberation Sans",sans-serif;font-size:12px;fill:#000;stroke:#fff;stroke-width:2.5px;paint-order:stroke;font-weight:500}</style><clipPath id="cv"><rect x="391" y="85" width="872" height="584"/></clipPath></defs>
<g clip-path="url(#cv)">
<path d="M1100.5 362.5 V402.5 H408.5 V283.5 H470.5" fill="none" stroke="#000" stroke-width="1.2" stroke-dasharray="6,5"/>
<path d="M457.5 199.5 L466.5 190.5 L930.5 190.5 L930.5 377 L921.5 386 L457.5 386Z" fill="#7acef4" stroke="#000" stroke-width="1.2" stroke-linejoin="miter"/><rect x="457.5" y="199.5" width="464.0" height="186.5" fill="#7acef4" stroke="#000" stroke-width="1.2"/><path d="M921.5 199.5 L930.5 190.5" stroke="#000" stroke-width="1.2"/>
<text x="460.7" y="201" class="mk">a</text>
<text x="689.5" y="217" text-anchor="middle" class="t">&lt;&lt;device&gt;&gt;</text>
<text x="690" y="235" text-anchor="middle" class="t b">User Device</text>
<path d="M468.5 254.5 L477.5 245.5 L904.5 245.5 L904.5 366.5 L895.5 375.5 L468.5 375.5Z" fill="#7acef4" stroke="#000" stroke-width="1.2" stroke-linejoin="miter"/><rect x="468.5" y="254.5" width="427.0" height="121.0" fill="#7acef4" stroke="#000" stroke-width="1.2"/><path d="M895.5 254.5 L904.5 245.5" stroke="#000" stroke-width="1.2"/>
<text x="471.7" y="256" class="mk">a</text>
<text x="682.5" y="272" text-anchor="middle" class="t b">Web Server</text>
<path d="M457.5 276.7 L470.7 283.5 L457.5 290.3" fill="none" stroke="#000" stroke-width="1.2"/>
<rect x="479.5" y="289.5" width="130" height="43" fill="none" stroke="#000" stroke-width="1.2"/>
<text x="483.7" y="300" class="mk">a</text>
<text x="485.5" y="307" class="t">&lt;&lt;component&gt;&gt;</text>
<text x="484.5" y="325" class="t b">Product Catalog</text>
<rect x="593.5" y="295.5" width="11" height="17" fill="none" stroke="#000" stroke-width="1.2"/><rect x="589.5" y="298.5" width="8" height="4" fill="#7acef4" stroke="#000" stroke-width="1.2"/><rect x="589.5" y="305.5" width="8" height="4" fill="#7acef4" stroke="#000" stroke-width="1.2"/>
<rect x="720.5" y="282.5" width="163" height="44" fill="none" stroke="#000" stroke-width="1.2"/>
<text x="724.7" y="293" class="mk">a</text>
<text x="788" y="304" text-anchor="middle" class="t">&lt;&lt;artifact&gt;&gt;</text>
<text x="725.5" y="320.5" class="t b">E-Commerce Website</text>
<path d="M865.5 288.5 H872.5 L876.5 292.5 V301.5 H865.5Z M872.5 288.5 V292.5 H876.5" fill="none" stroke="#000" stroke-width="1.2"/>
<path d="M612 305.5 H719" fill="none" stroke="#000" stroke-width="1.2" stroke-dasharray="6,5"/>
<path d="M707.5 298.3 L720 305.5 L707.5 312.3" fill="none" stroke="#000" stroke-width="1.2"/>
<text x="662.5" y="298" text-anchor="middle" class="t">&lt;&lt;usage&gt;&gt;</text>
<text x="894" y="366" text-anchor="end" class="t">Product Catalog - Order Management</text>
<text x="981.5" y="373" text-anchor="middle" class="t">&lt;&lt;manifest&gt;&gt;</text>
<path d="M1022.5 273.5 L1031.5 264.5 L1203.5 264.5 L1203.5 363 L1194.5 372 L1022.5 372Z" fill="#7acef4" stroke="#000" stroke-width="1.2" stroke-linejoin="miter"/><rect x="1022.5" y="273.5" width="172.0" height="98.5" fill="#7acef4" stroke="#000" stroke-width="1.2"/><path d="M1194.5 273.5 L1203.5 264.5" stroke="#000" stroke-width="1.2"/>
<text x="1025.7" y="275" class="mk">a</text>
<text x="1107.5" y="291" text-anchor="middle" class="t b">Database Server</text>
<rect x="1033.5" y="319.5" width="148" height="43" fill="none" stroke="#000" stroke-width="1.2"/>
<text x="1037.7" y="330" class="mk">a</text>
<text x="1049.5" y="337" class="t">&lt;&lt;component&gt;&gt;</text>
<text x="1038.5" y="355" class="t b">Order Management</text>
<rect x="1165" y="325.5" width="11" height="17" fill="none" stroke="#000" stroke-width="1.2"/><rect x="1161" y="328.5" width="8" height="4" fill="#7acef4" stroke="#000" stroke-width="1.2"/><rect x="1161" y="335.5" width="8" height="4" fill="#7acef4" stroke="#000" stroke-width="1.2"/>
<path d="M1022.5 453.5 L1030.5 444.5 L1211.5 444.5 L1211.5 543 L1203.5 552 L1022.5 552Z" fill="#7acef4" stroke="#000" stroke-width="1.2" stroke-linejoin="miter"/><rect x="1022.5" y="453.5" width="181.0" height="98.5" fill="#7acef4" stroke="#000" stroke-width="1.2"/><path d="M1203.5 453.5 L1211.5 444.5" stroke="#000" stroke-width="1.2"/>
<text x="1025.7" y="455" class="mk">a</text>
<text x="1111" y="471" text-anchor="middle" class="t">&lt;&lt;device&gt;&gt;</text>
<text x="1111" y="489" text-anchor="middle" class="t b">Payment Gateway</text>
<rect x="1033.5" y="499.5" width="156" height="43" fill="none" stroke="#000" stroke-width="1.2"/>
<text x="1037.7" y="510" class="mk">a</text>
<text x="1098" y="517" text-anchor="middle" class="t">&lt;&lt;component&gt;&gt;</text>
<text x="1038.5" y="535" class="t b">Payment Processing</text>
<rect x="1174" y="505.5" width="11" height="17" fill="none" stroke="#000" stroke-width="1.2"/><rect x="1170" y="508.5" width="8" height="4" fill="#7acef4" stroke="#000" stroke-width="1.2"/><rect x="1170" y="515.5" width="8" height="4" fill="#7acef4" stroke="#000" stroke-width="1.2"/>
<path d="M613.5 320.5 H655.5 V349.5 H941.5 V334.5 H1033" fill="none" stroke="#000" stroke-width="1.2"/>
<path d="M906.5 356.5 H1032" fill="none" stroke="#000" stroke-width="1.2" stroke-dasharray="6,5"/>
<path d="M1020.3 349.3 L1033 356.4 L1026 359.5" fill="none" stroke="#000" stroke-width="1.2"/>
<path d="M1100.5 362.5 V402.5" fill="none" stroke="#000" stroke-width="1.2" stroke-dasharray="6,5"/>
<path d="M1161.5 362.5 V499.5" fill="none" stroke="#000" stroke-width="1.2"/>
<rect x="1038" y="425" width="226" height="15" fill="#fff"/>
<text x="1039.5" y="436" class="t">Order Management - Payment Processing</text>
</g></svg>
<div class="a" style="left:1251px;top:362px;width:12px;height:27px;background:#e2e2e2;border:1px solid #d0d0d0"></div>
<div class="a" style="left:1253px;top:366px;width:1px;height:19px;background:#777"></div>
<div class="a" style="left:1256px;top:366px;width:1px;height:19px;background:#777"></div>
<div class="a" style="left:1259px;top:366px;width:1px;height:19px;background:#777"></div>
<div class="a" style="left:438px;top:676px;width:760px;height:2px;background:#7a7a7a"></div>
<svg class="a" style="left:1248px;top:670px" width="16" height="16"><path d="M8 0 L16 8 L8 16 L0 8Z" fill="#000"/><rect x="5" y="5" width="2.5" height="2.5" fill="#fff"/><rect x="8.5" y="5" width="2.5" height="2.5" fill="#fff"/><rect x="5" y="8.5" width="2.5" height="2.5" fill="#fff"/><rect x="8.5" y="8.5" width="2.5" height="2.5" fill="#fff"/></svg>
<div class="a" style="left:390px;top:669px;width:6px;height:16px;background:#fff"></div><div class="a" style="left:395px;top:669px;width:1.5px;height:16px;background:#7d7d7d"></div><div class="a" style="left:390px;top:684px;width:6px;height:1px;background:#6d6d6d"></div>
<div class="a" style="left:242px;top:57px;width:318px;height:22px;background:linear-gradient(#fafafa,#f2f2f2);border:1px solid #c4c4c4;border-right:none"></div>
<svg class="a" style="left:558px;top:57px" width="16" height="22"><path d="M0 0.5 H2.5 L14 11 L2.5 21.5 H0" fill="#f5f5f5" stroke="#c4c4c4"/></svg>
<div class="a" style="left:250px;top:61px;font-size:13.5px;line-height:16px;color:#6b6b6b">Web-Based E-Commerce Application Deployment</div>
<svg class="a" style="left:1164px;top:58px" width="24" height="22" viewBox="0 0 24 22"><path d="M12 1 V5" stroke="#3a7ac0" stroke-width="1.5"/><rect x="4" y="5" width="16" height="13" rx="2" fill="#8cc4f0"/><rect x="1" y="9" width="3" height="6" fill="#8cc4f0"/><rect x="20" y="9" width="3" height="6" fill="#8cc4f0"/><rect x="7" y="9" width="2.5" height="2.5" fill="#2a4a70"/><rect x="14.5" y="9" width="2.5" height="2.5" fill="#2a4a70"/><path d="M9 14 H15 L12 17Z" fill="#2a4a70"/></svg>
<div class="a" style="left:1194px;top:58px;width:22px;height:20px;border:1px solid #78b878;border-radius:2px;background:#e8ece8"></div>
<svg class="a" style="left:1197px;top:60px" width="17" height="17" viewBox="0 0 17 17"><g transform="rotate(-28 8.5 8.5)"><path d="M2 6 H6 L13 2 V13 L6 10 H2Z" fill="#4d5b75"/><path d="M4.5 10 L5.5 15 H7.5 L7 10" fill="#4d5b75"/><path d="M14.5 5 L16.5 3.5 M14.5 7.5 H17 M14.5 10 L16.5 11.5" stroke="#8a9ab0" stroke-width="0.8"/></g></svg>
<svg class="a" style="left:1223px;top:60px" width="22" height="21"><rect x="0.5" y="1.5" width="19" height="17" fill="#f4f4f4" stroke="#1f5a78" rx="1"/><rect x="0.5" y="0.5" width="19" height="5" fill="#6aa4e8" stroke="#2a68d0" rx="1.5"/><path d="M5.5 5.5 V18.5" stroke="#1f5a78"/><path d="M13 14.5 L17 12.5 L21 14.5 L17 16.5Z M13 16.5 L17 18.5 L21 16.5 M13 18.5 L17 20.5 L21 18.5" fill="#d0d0d0" stroke="#999" stroke-width="0.7"/><path d="M15 11 L17 9.5 L19 11 L17 12.5Z" fill="#3a8ae8"/></svg>

<!-- STATUS -->
<div class="a" style="left:0;top:686px;width:1266px;height:27px;background:linear-gradient(#fafafa,#f0f2f2)"></div>
<div class="a" style="left:0;top:686px;width:1266px;height:1px;background:#ececec"></div>
<div class="a" style="left:0;top:712px;width:1266px;height:1px;background:#9a9a9a"></div>
<svg class="a" style="left:1195px;top:693px" width="19" height="14"><rect x="0.5" y="0.5" width="17" height="12" fill="#f4f4f4" stroke="#5a9ae0"/><path d="M1 1 L9 7 L17 1" stroke="#5a9ae0" fill="none"/></svg>
<svg class="a" style="left:1229px;top:689px" width="17" height="19"><path d="M0.5 0.5 H10 L15.5 6 V17.5 H0.5Z" fill="#f0f0f0" stroke="#5a9ae0"/><path d="M3 8 H13 M3 11 H13 M3 14 H10" stroke="#ccc" stroke-width="1.5"/><path d="M5 16 L13 3" stroke="#2a8ab0" stroke-width="1.3"/></svg>

<div class="a" style="left:0;top:0;width:1266px;height:713px;border:1px solid #b4b4b4;border-bottom:none;border-radius:0 8px 0 0;pointer-events:none"></div>
</div>
</body></html>
